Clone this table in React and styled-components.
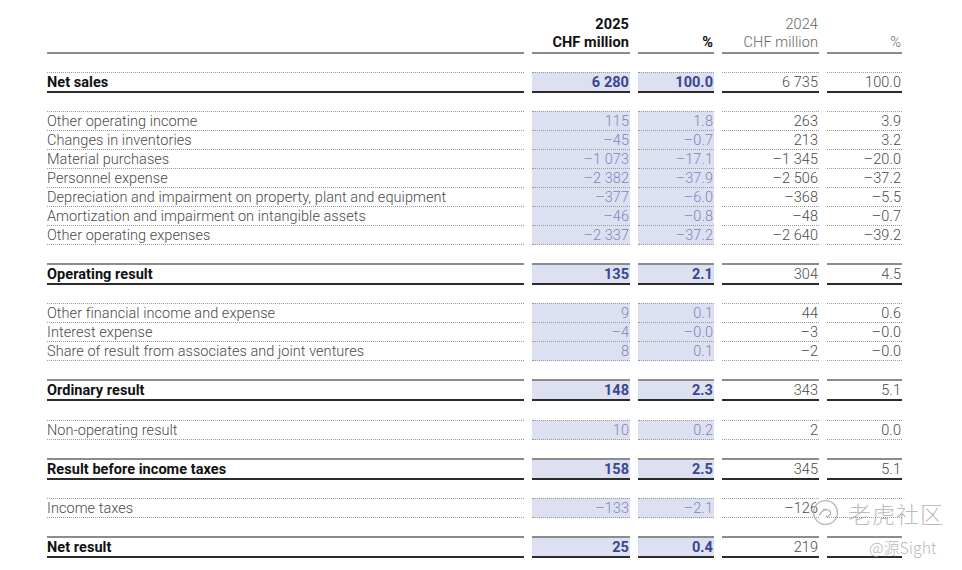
import React from "react";
import styled, { createGlobalStyle, css } from "styled-components";

const Global = createGlobalStyle`
  html, body { margin: 0; padding: 0; background: #fff; }
  body { font-family: Roboto, "Liberation Sans", Arial, sans-serif; }
`;

const Page = styled.div`
  position: relative;
  width: 962px;
  height: 570px;
  overflow: hidden;
  padding: 1px 0 0 47px;
  box-sizing: border-box;
`;

const Table = styled.div`
  display: flex;
  flex-direction: column;
  gap: 18.1px;
`;

const Group = styled.div`
  display: flex;
  flex-direction: column;
`;

const Row = styled.div`
  display: grid;
  grid-template-columns: 477px 98px 76px 97px 75px;
  column-gap: 8px;
`;

const HeadCell = styled.div`
  padding-top: 15px;
  height: 36px;
  border-bottom: 2px solid #8c8c8c;
  text-align: right;
  font-size: 14.5px;
  letter-spacing: 0.1px;
  line-height: 18px;
  padding-right: 1px;
  color: ${(p) => (p.$current ? "#111" : "#666")};
  font-weight: ${(p) => (p.$current ? 700 : 300)};
  white-space: nowrap;
`;

const lines = {
  detail: css`
    border-bottom: 1px dotted #9a9a9a;
  `,
  lead: css`
    border-top: 1px dotted #9a9a9a;
    border-bottom: 2px solid #2b2b2b;
  `,
  total: css`
    border-top: 2px solid #8c8c8c;
    border-bottom: 2px solid #2b2b2b;
  `,
};

const Cell = styled.div`
  height: 18px;
  line-height: 19px;
  font-size: 14.5px;
  letter-spacing: 0.05px;
  white-space: nowrap;
  ${(p) => lines[p.$kind]}
  ${(p) => p.$first && p.$kind === "detail" && css`border-top: 1px dotted #9a9a9a;`}
  text-align: ${(p) => (p.$label ? "left" : "right")};
  padding-right: ${(p) => (p.$label ? "0" : "1px")};
  background: ${(p) => (p.$hl ? "#dde0f1" : "transparent")};
  font-weight: ${(p) => (p.$bold && (p.$label || p.$hl) ? 700 : 300)};
  color: ${(p) =>
    p.$label
      ? p.$bold
        ? "#111"
        : "#4a4a4a"
      : p.$hl
      ? p.$bold
        ? "#3a4690"
        : "#7f85bd"
      : "#4a4a4a"};
`;

const Watermark = styled.div`
  position: absolute;
  left: 812px;
  top: 499px;
  display: flex;
  align-items: center;
  gap: 9px;
  color: rgba(165, 165, 165, 0.75);
  font-family: "Noto Sans CJK SC", sans-serif;
  font-size: 23px;
  line-height: 26px;
  font-weight: 300;
  letter-spacing: 1px;
  pointer-events: none;
`;

const Handle = styled.div`
  position: absolute;
  left: 869px;
  top: 537px;
  color: rgba(165, 165, 165, 0.8);
  font-family: "Noto Sans CJK SC", sans-serif;
  font-size: 16px;
  line-height: 20px;
  font-weight: 300;
  pointer-events: none;
`;

const groups = [
  { kind: "lead", rows: [["Net sales", "6 280", "100.0", "6 735", "100.0"]], bold: true },
  {
    kind: "detail",
    rows: [
      ["Other operating income", "115", "1.8", "263", "3.9"],
      ["Changes in inventories", "–45", "–0.7", "213", "3.2"],
      ["Material purchases", "–1 073", "–17.1", "–1 345", "–20.0"],
      ["Personnel expense", "–2 382", "–37.9", "–2 506", "–37.2"],
      ["Depreciation and impairment on property, plant and equipment", "–377", "–6.0", "–368", "–5.5"],
      ["Amortization and impairment on intangible assets", "–46", "–0.8", "–48", "–0.7"],
      ["Other operating expenses", "–2 337", "–37.2", "–2 640", "–39.2"],
    ],
  },
  { kind: "total", rows: [["Operating result", "135", "2.1", "304", "4.5"]], bold: true },
  {
    kind: "detail",
    rows: [
      ["Other financial income and expense", "9", "0.1", "44", "0.6"],
      ["Interest expense", "–4", "–0.0", "–3", "–0.0"],
      ["Share of result from associates and joint ventures", "8", "0.1", "–2", "–0.0"],
    ],
  },
  { kind: "total", rows: [["Ordinary result", "148", "2.3", "343", "5.1"]], bold: true },
  { kind: "detail", rows: [["Non-operating result", "10", "0.2", "2", "0.0"]] },
  { kind: "total", rows: [["Result before income taxes", "158", "2.5", "345", "5.1"]], bold: true },
  { kind: "detail", rows: [["Income taxes", "–133", "–2.1", "–126", ""]] },
  { kind: "total", rows: [["Net result", "25", "0.4", "219", ""]], bold: true },
];

function Logo() {
  return (
    <svg width="27" height="27" viewBox="0 0 26 26" fill="none" stroke="rgba(165,165,165,0.8)" strokeWidth="1.3">
      <circle cx="13" cy="13" r="11.5" />
      <path d="M7 16c2-5 6-7 9.5-5s0 6.5-3.5 6.5" />
      <path d="M10.5 9.5c1 1 2.5 1 3.5 0" />
    </svg>
  );
}

export default function App() {
  return (
    <Page>
      <Global />
      <Table>
        <Row>
          <HeadCell />
          <HeadCell $current>
            2025
            <br />
            CHF million
          </HeadCell>
          <HeadCell $current>
            <br />%
          </HeadCell>
          <HeadCell>
            2024
            <br />
            CHF million
          </HeadCell>
          <HeadCell>
            <br />%
          </HeadCell>
        </Row>
        {groups.map((g, gi) => (
          <Group key={gi}>
            {g.rows.map((r, ri) => (
              <Row key={ri}>
                {r.map((v, ci) => (
                  <Cell
                    key={ci}
                    $kind={g.kind}
                    $first={ri === 0}
                    $label={ci === 0}
                    $hl={ci === 1 || ci === 2}
                    $bold={!!g.bold}
                  >
                    {v}
                  </Cell>
                ))}
              </Row>
            ))}
          </Group>
        ))}
      </Table>
      <Watermark>
        <Logo />
        老虎社区
      </Watermark>
      <Handle>@源Sight</Handle>
    </Page>
  );
}
